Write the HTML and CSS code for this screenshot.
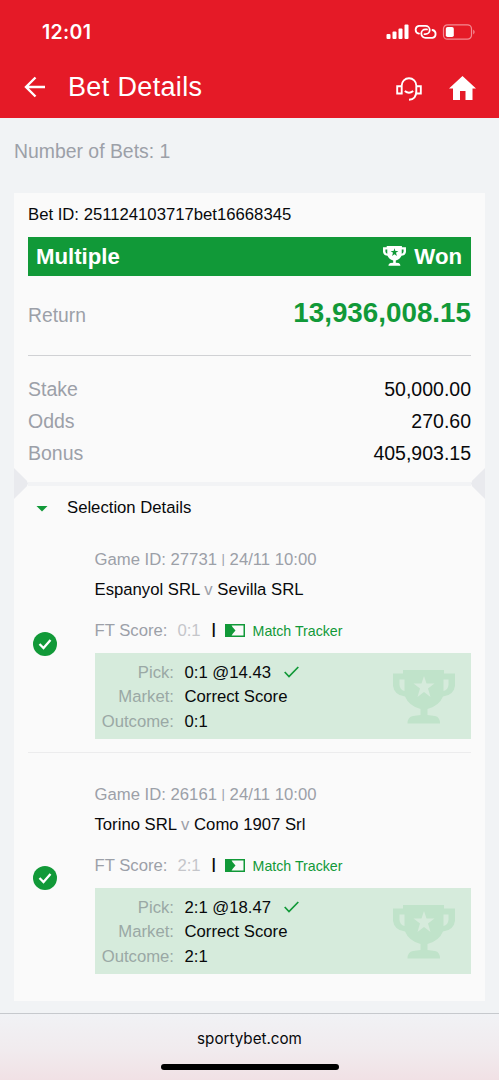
FILE: index.html
```
<!DOCTYPE html>
<html lang="en">
<head>
<meta charset="utf-8">
<title>Bet Details</title>
<link rel="stylesheet" href="styles.css">
</head>
<body>
<svg class="defs" width="0" height="0" aria-hidden="true">
  <symbol id="trophy" viewBox="0 0 62 54">
    <path fill-rule="evenodd" d="M10 0H51V3.500H62V16Q60.500 25.500 50 26.500Q46 36 34.500 39V45L42 46Q47 47 47 53.500H14.500Q14.500 47 20 46L27.500 45V39Q16 36 12 26.500Q1.500 25.500 0 16V3.500H10ZM6.500 9.500V15Q7 20 11.500 21V9.500ZM50.500 9.500V21Q55 20 55.500 15V9.500ZM31 6L28.500 13.500H20.500L27 18.500L24.500 27L31 22L37.500 27L35 18.500L41.500 13.500H33.500Z"/>
  </symbol>
</svg>
<header class="top">
  <div class="status">
    <span class="clock">12:01</span>
    <svg class="status-icons" width="90" height="18" viewBox="0 0 90 18">
      <g fill="#fff">
        <rect x="0.500" y="10" width="4" height="5" rx="1"/><rect x="6.500" y="7.500" width="4" height="7.500" rx="1"/><rect x="12.500" y="4.500" width="4" height="10.500" rx="1"/><rect x="18.500" y="0.500" width="4" height="14.500" rx="1"/>
        <rect x="59.800" y="3" width="8" height="10" rx="1.800"/>
      </g>
      <g fill="none" stroke="#fff" stroke-width="1.800" stroke-linecap="round">
        <path d="M33 9.700A4 4 0 0 1 33 1.800H39.500A4.200 4.200 0 0 1 39.500 10.200H38.500"/>
        <path d="M46.500 6A4 4 0 0 1 46.500 13.800H39.500A4.200 4.200 0 0 1 39.500 5.400H41"/>
      </g>
      <rect x="57.500" y="0.800" width="28" height="14.400" rx="4" fill="none" stroke="#f38a92" stroke-width="1.200"/>
      <path d="M87.200 5.500Q90.200 8 87.200 10.500Z" fill="#f38a92"/>
    </svg>
  </div>
  <div class="nav">
    <svg class="back" width="22" height="22" viewBox="0 0 22 22" fill="none" stroke="#fff" stroke-width="2.400"><path d="M21 11H2M11.500 1.500L2 11L11.500 20.500"/></svg>
    <h1 class="title">Bet Details</h1>
    <svg class="support" width="26" height="25" viewBox="0 0 26 25" fill="none" stroke="#fff" stroke-width="1.900"><path d="M5.700 9V8.500A7.300 7.300 0 0 1 20.300 8.500V14Q20.300 22.500 13 22.700M1.200 9.200H5.700V16.500H1.200ZM20.300 9.200H24.800V16.500H20.300ZM8.800 14Q13 17.500 17.200 14"/></svg>
    <svg class="home" width="27" height="24" viewBox="0 0 27 24" fill="#fff"><path d="M13.500 0L27 12.500H23.500V24H16.500V15H11V24H4V12.500H0Z"/></svg>
  </div>
</header>
<main>
  <p class="count">Number of Bets: 1</p>
  <section class="card">
    <p class="bet-id">Bet ID: 251124103717bet16668345</p>
    <div class="banner"><span>Multiple</span><span class="won"><svg width="23" height="20"><use href="#trophy"/></svg>Won</span></div>
    <div class="return"><span class="label">Return</span><strong>13,936,008.15</strong></div>
    <dl class="totals">
      <div><dt>Stake</dt><dd>50,000.00</dd></div>
      <div><dt>Odds</dt><dd>270.60</dd></div>
      <div><dt>Bonus</dt><dd>405,903.15</dd></div>
    </dl>
    <div class="tear"><i class="notch left"></i><i class="line"></i><i class="notch right"></i></div>
    <h2 class="selection-title"><i class="caret"></i>Selection Details</h2>
    <article class="pick">
      <svg class="check" width="24" height="24" viewBox="0 0 24 24"><circle cx="12" cy="12" r="12" fill="#119938"/><path d="M6.500 12L10.500 16L17.500 8" fill="none" stroke="#fff" stroke-width="2.300"/></svg>
      <div class="game">
        <p class="game-id">Game ID: 27731 <span class="bar">|</span> 24/11 10:00</p>
        <p class="teams">Espanyol SRL <span>v</span> Sevilla SRL</p>
        <p class="score"><span>FT Score:</span><span class="result">0:1</span><span class="bar">|</span><svg width="20" height="13" viewBox="0 0 20 13"><rect x=".75" y=".75" width="18.500" height="11.500" fill="none" stroke="#119938" stroke-width="1.500"/><path d="M0 0H6L7.500 3L10.500 6.500L7.500 10L6 13H0Z" fill="#119938"/></svg><a>Match Tracker</a></p>
        <div class="result-box">
          <dl>
            <dt>Pick:</dt><dd>0:1 @14.43<svg width="15" height="12" viewBox="0 0 15 12"><path d="M.7 6L5 10.500L14.300 1" fill="none" stroke="#119938" stroke-width="1.700"/></svg></dd>
            <dt>Market:</dt><dd>Correct Score</dd>
            <dt>Outcome:</dt><dd>0:1</dd>
          </dl>
          <svg class="watermark" width="62" height="54"><use href="#trophy"/></svg>
        </div>
      </div>
    </article>
    <article class="pick">
      <svg class="check" width="24" height="24" viewBox="0 0 24 24"><circle cx="12" cy="12" r="12" fill="#119938"/><path d="M6.500 12L10.500 16L17.500 8" fill="none" stroke="#fff" stroke-width="2.300"/></svg>
      <div class="game">
        <p class="game-id">Game ID: 26161 <span class="bar">|</span> 24/11 10:00</p>
        <p class="teams">Torino SRL <span>v</span> Como 1907 Srl</p>
        <p class="score"><span>FT Score:</span><span class="result">2:1</span><span class="bar">|</span><svg width="20" height="13" viewBox="0 0 20 13"><rect x=".75" y=".75" width="18.500" height="11.500" fill="none" stroke="#119938" stroke-width="1.500"/><path d="M0 0H6L7.500 3L10.500 6.500L7.500 10L6 13H0Z" fill="#119938"/></svg><a>Match Tracker</a></p>
        <div class="result-box">
          <dl>
            <dt>Pick:</dt><dd>2:1 @18.47<svg width="15" height="12" viewBox="0 0 15 12"><path d="M.7 6L5 10.500L14.300 1" fill="none" stroke="#119938" stroke-width="1.700"/></svg></dd>
            <dt>Market:</dt><dd>Correct Score</dd>
            <dt>Outcome:</dt><dd>2:1</dd>
          </dl>
          <svg class="watermark" width="62" height="54"><use href="#trophy"/></svg>
        </div>
      </div>
    </article>
  </section>
</main>
<footer class="browser-bar"><span>sportybet.com</span><i class="home-indicator"></i></footer>
</body>
</html>
```
FILE: styles.css
```
* { box-sizing: border-box; }
body, p, h1, h2, dl, dd { margin: 0; }
.defs { position: absolute; }
body {
  width: 499px;
  height: 1080px;
  display: flex;
  flex-direction: column;
  overflow: hidden;
  background: #f1f3f5;
  font-family: "Liberation Sans", Arial, sans-serif;
  font-size: 16.7px;
  color: #08090b;
}
i { display: block; }
svg { flex: none; }

.top { height: 118px; background: #e51a27; color: #fff; }
.status {
  height: 58px;
  padding: 6px 25px 0 42px;
  display: flex;
  align-items: center;
  justify-content: space-between;
}
.clock { font: 600 19.5px/24px Inter, sans-serif; letter-spacing: 0.3px; }
.status-icons { width: 90px; margin-right: -2px; margin-top: 2px; }
.nav { height: 60px; padding: 0 23px 2px 24px; display: flex; align-items: center; }
.title { margin-left: 22px; font-size: 27px; font-weight: 400; line-height: 32px; letter-spacing: 0.35px; }
.support { margin-left: auto; margin-right: 27px; margin-top: 4px; }
.home { margin-top: 2px; }

main { flex: 1; padding: 0 14px; }
.count { height: 75px; padding-top: 21px; font-size: 19.4px; line-height: 24px; color: #9ca0a8; }
.card { height: 808px; background: #fafafa; }
.bet-id { height: 44px; padding: 11px 14px 0; line-height: 22px; }
.banner {
  height: 39px;
  margin: 0 14px;
  padding: 0 9px 0 8px;
  display: flex;
  align-items: center;
  justify-content: space-between;
  background: #119938;
  color: #fff;
  font-size: 22.2px;
  font-weight: 700;
}
.won { display: flex; align-items: center; gap: 8px; }
.won svg { margin-top: -2px; }
.won svg, .watermark { fill: currentColor; }
.return {
  height: 80px;
  margin: 0 14px;
  padding-bottom: 3px;
  display: flex;
  align-items: center;
  justify-content: space-between;
  border-bottom: 1px solid #d0d1d4;
  font-size: 19.3px;
}
.return strong { padding-bottom: 3px; font-size: 27.8px; line-height: 32px; color: #119938; }
.return .label { padding-top: 3px; }
.label, .totals dt { color: #9ca0a8; }
.totals { height: 112px; padding: 17px 14px 0; font-size: 19.500px; line-height: 32.200px; }
.totals div { display: flex; justify-content: space-between; }
.tear { height: 31px; display: flex; align-items: center; }
.line { flex: 1; height: 4px; margin-top: 1px; background: #f2f3f5; }
.notch { width: 14px; height: 31px; background: #e9eaee; }
.notch.left { clip-path: polygon(0 0, 90% 40%, 100% 50%, 90% 60%, 0 100%); }
.notch.right { clip-path: polygon(100% 0, 10% 40%, 0 50%, 10% 60%, 100% 100%); }
.selection-title {
  height: 38px;
  padding: 0 22px 20px;
  display: flex;
  align-items: center;
  gap: 19px;
  font-size: 16.7px;
  font-weight: 400;
}
.caret { width: 12px; height: 6px; margin-top: 1px; background: #119938; clip-path: polygon(0 0, 100% 0, 50% 100%); }

.pick { height: 234px; margin: 0 14px; display: flex; }
.pick:nth-of-type(1) { height: 216px; border-bottom: 1px solid #ececed; }
.pick:nth-of-type(2) { padding-top: 19px; }
.check { margin: 95px 37.500px 0 5px; }
.pick:nth-of-type(2) .check { margin-top: 94px; }
.game { flex: 1; padding-top: 11px; }
.game-id { height: 29px; line-height: 24px; color: #9ca0a8; }
.game-id .bar { display: inline-block; font-size: 13px; transform: translateY(-2px); }
.teams { height: 41px; line-height: 26px; }
.teams span { color: #9ca0a8; }
.score { height: 24px; padding-top: 1px; display: flex; align-items: center; color: #9ca0a8; }
.result { margin-left: 10px; color: #c5c6ca; }
.score .bar { margin: -4px 9px 0 11px; font-size: 14px; font-weight: 700; color: #08090b; }
.score a { margin-left: 8px; font-size: 14.200px; color: #119938; }
.result-box {
  height: 86px;
  margin-top: 11px;
  padding: 7px 16px 0 6px;
  display: flex;
  justify-content: space-between;
  background: #d6ebdc;
}
.result-box dl { padding-top: 1px; display: grid; grid-template-columns: 73.500px auto; grid-auto-rows: 24.300px; line-height: 24px; column-gap: 10.500px; }
.result-box dt { text-align: right; color: #9aa8a5; }
.result-box dd svg { margin-left: 13px; }
.watermark { margin-top: 10px; color: #c0e3ca; }

.browser-bar {
  height: 67px;
  padding-top: 14px;
  display: flex;
  flex-direction: column;
  align-items: center;
  border-top: 1px solid #c6c9cd;
  background: linear-gradient(#f1f2f5, #f1ebee 55%, #f1e1e5);
  font: 400 15.2px/22px Inter, sans-serif;
}
.home-indicator { width: 178px; height: 6px; margin-top: 14px; border-radius: 3px; background: #000; }
```
